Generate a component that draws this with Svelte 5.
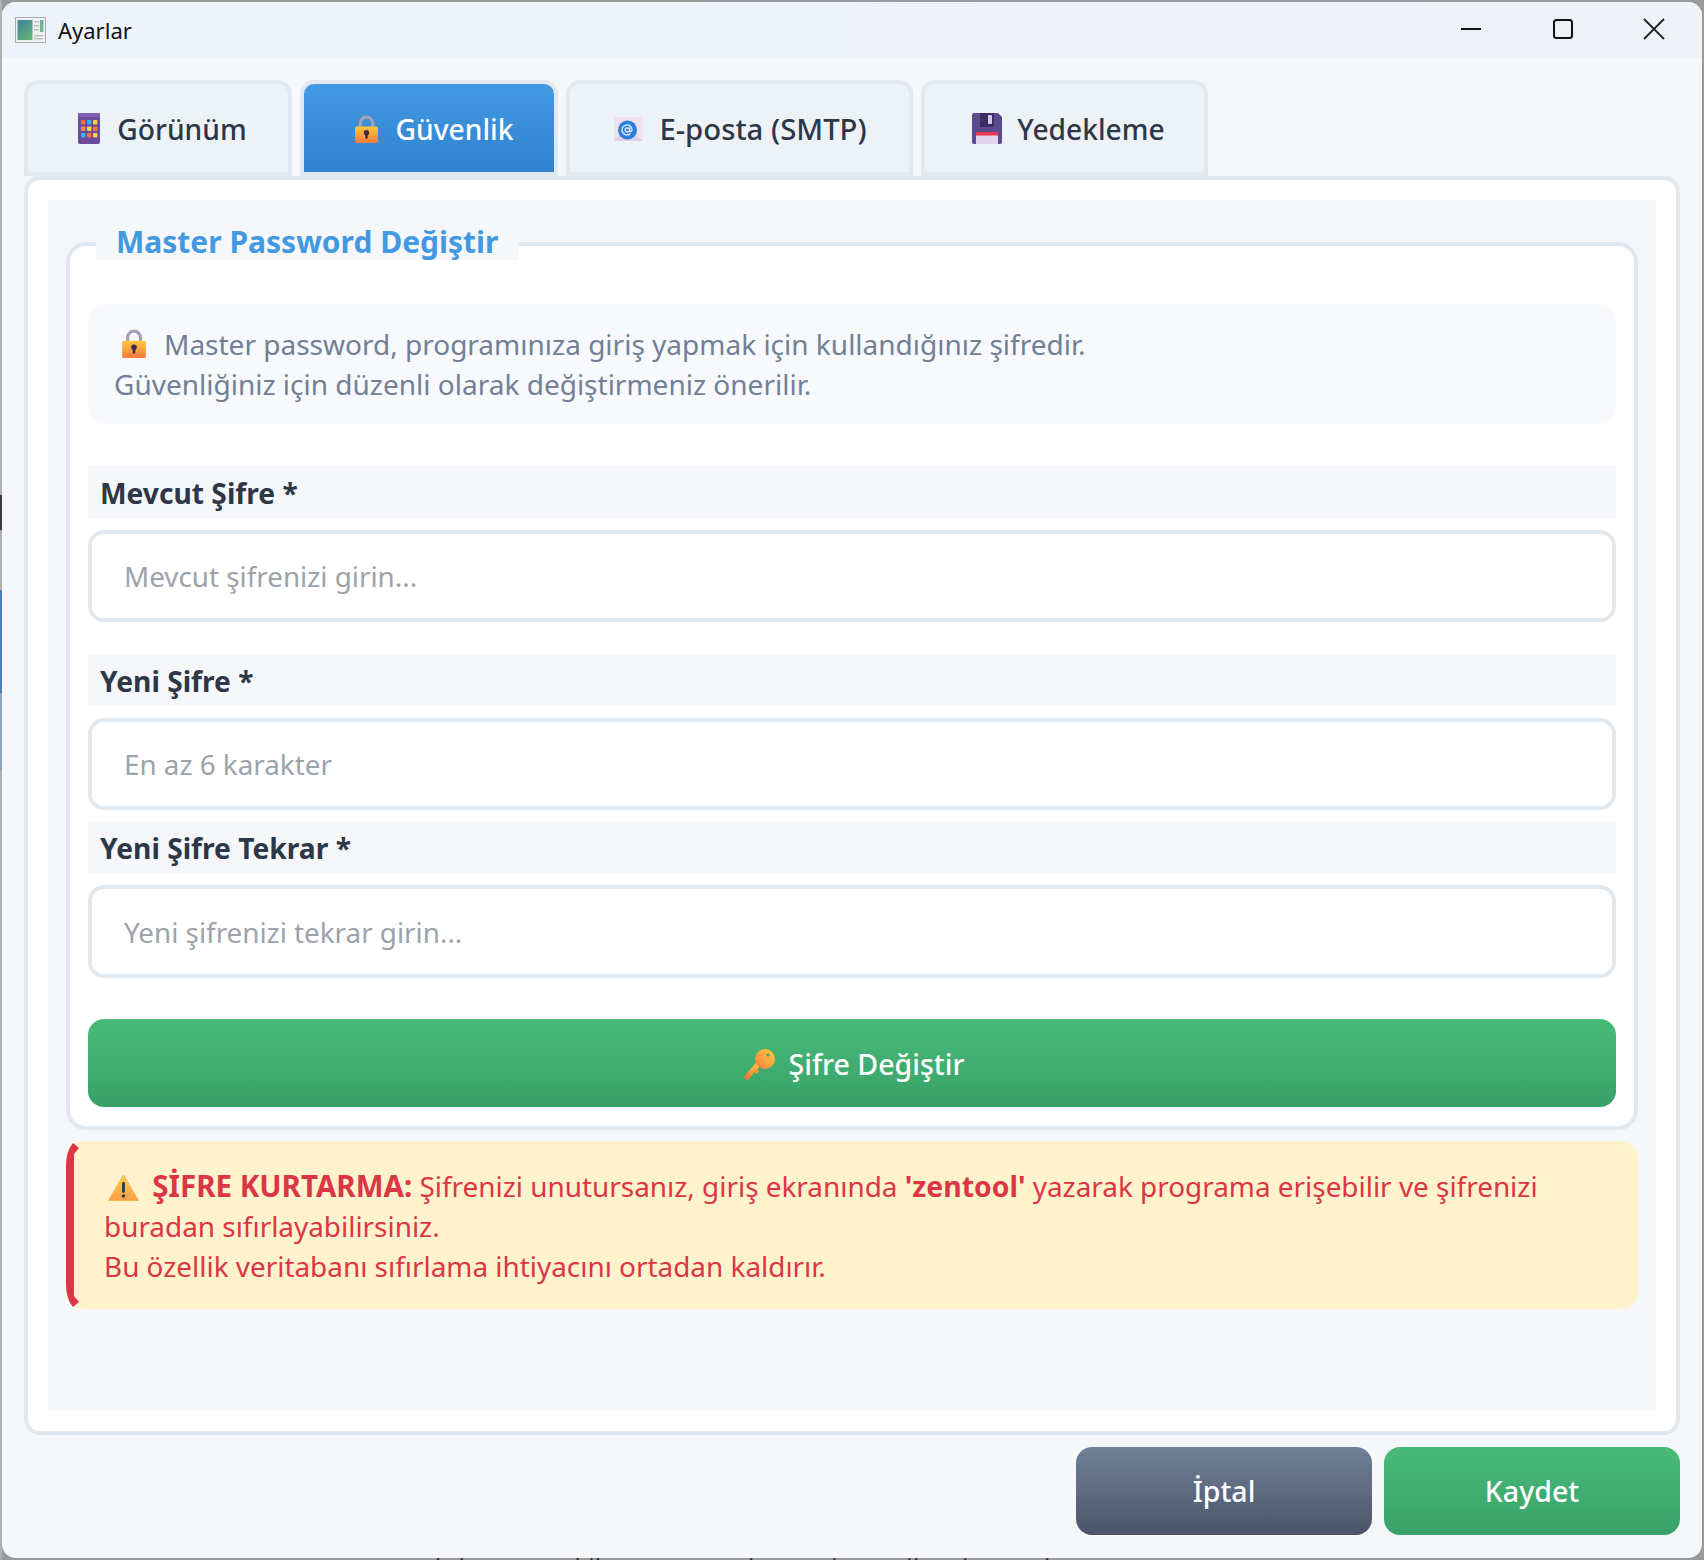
<script lang="ts">
  const tabs = [
    { id: "look", label: "Görünüm", width: 268 },
    { id: "lock", label: "Güvenlik", width: 258 },
    { id: "mail", label: "E-posta (SMTP)", width: 347 },
    { id: "disk", label: "Yedekleme", width: 287 },
  ];
  const fields = [
    { label: "Mevcut Şifre *", hint: "Mevcut şifrenizi girin...", cls: "first" },
    { label: "Yeni Şifre *", hint: "En az 6 karakter", cls: "second" },
    { label: "Yeni Şifre Tekrar *", hint: "Yeni şifrenizi tekrar girin...", cls: "third" },
  ];
</script>

{#snippet lock(size)}
  <svg class="emoji" width={size} height={size * 1.12} viewBox="0 0 24 27">
    <defs>
      <linearGradient id="lockBody" x1="0" y1="0" x2="0" y2="1">
        <stop offset="0" stop-color="#ffc83d" />
        <stop offset="1" stop-color="#f9793b" />
      </linearGradient>
    </defs>
    <path d="M6 12V8a6 6 0 0 1 12 0v4" fill="none" stroke="#a79fb8" stroke-width="3" />
    <rect x="1" y="11" width="22" height="16" rx="1.5" fill="url(#lockBody)" />
    <circle cx="12" cy="17" r="2.6" fill="#3b2f4a" />
    <rect x="10.8" y="17" width="2.4" height="6" rx="1" fill="#3b2f4a" />
  </svg>
{/snippet}

{#snippet tabIcon(id)}
  {#if id === "look"}
    <svg class="emoji" width="22" height="31" viewBox="0 0 22 31">
      <rect width="22" height="31" rx="2" fill="#6b4a9e" />
      <rect width="22" height="4" fill="#7f5fb5" />
      {#each [0, 1, 2] as r}
        {#each [0, 1, 2] as c}
          <rect
            x={3 + c * 6}
            y={7 + r * 6.5}
            width="4.4"
            height="4.4"
            rx="0.8"
            fill={[["#f4743b", "#33b5e5", "#ffd23f"], ["#ff8c42", "#ffd23f", "#f4743b"], ["#33b5e5", "#f4743b", "#ffd23f"]][r][c]}
          />
        {/each}
      {/each}
    </svg>
  {:else if id === "lock"}
    {@render lock(25)}
  {:else if id === "mail"}
    <svg class="emoji" width="29" height="24" viewBox="0 0 29 24">
      <rect width="29" height="24" fill="#efe2f0" />
      <path d="M0 24 L12 10 L29 24Z" fill="#dcd0ea" />
      <circle cx="13.5" cy="13" r="9.5" fill="#2f7fd6" />
      <path d="M16.5 16.5a5 5 0 1 1 1.5-3.5c0 2-2.4 2.2-2.4.4V10.5M15.6 13a2.2 2.2 0 1 1-4.4 0a2.2 2.2 0 0 1 4.4 0Z" fill="none" stroke="#e6eefa" stroke-width="1.3" />
    </svg>
  {:else}
    <svg class="emoji" width="30" height="31" viewBox="0 0 30 31">
      <path d="M2 0h24l4 4v25a2 2 0 0 1-2 2H2a2 2 0 0 1-2-2V2a2 2 0 0 1 2-2Z" fill="#5b4a8e" />
      <path d="M8 0h14v13a1 1 0 0 1-1 1H9a1 1 0 0 1-1-1Z" fill="#3a2f63" />
      <rect x="16" y="2" width="4" height="9" rx="1" fill="#d9c8e6" />
      <rect x="4" y="19" width="22" height="12" fill="#e2d3ea" />
      <rect x="4" y="19" width="22" height="3.5" fill="#e8384f" />
    </svg>
  {/if}
{/snippet}

<div class="desktop">
  <div class="edge"></div>
  <div class="behind">n. click on any of these new customers to see their transaction</div>
</div>

<div class="window">
  <header class="titlebar">
    <svg class="app-icon" width="31" height="26" viewBox="0 0 31 26">
      <defs>
        <linearGradient id="appPane" x1="0" y1="0" x2="0.6" y2="1">
          <stop offset="0" stop-color="#3f7f9c" />
          <stop offset="1" stop-color="#5fb27a" />
        </linearGradient>
      </defs>
      <rect x="0.5" y="0.5" width="30" height="25" fill="#eef0f2" stroke="#a6acb0" />
      <rect x="2.5" y="3" width="15" height="20" fill="url(#appPane)" />
      <rect x="19" y="4" width="5" height="1.4" fill="#b8bfc4" />
      <rect x="19" y="8" width="5" height="1.4" fill="#b8bfc4" />
      <rect x="19" y="12" width="5" height="1.4" fill="#b8bfc4" />
      <rect x="25" y="3" width="3.5" height="12" fill="#6fb58f" />
      <rect x="19" y="18" width="9" height="1.4" fill="#b8bfc4" />
      <rect x="19" y="21" width="9" height="1.4" fill="#b8bfc4" />
    </svg>
    <span class="title">Ayarlar</span>
    <div class="controls">
      <svg width="24" height="24" viewBox="0 0 24 24"><path d="M1 12h20" stroke="#111" stroke-width="2" /></svg>
      <svg width="24" height="24" viewBox="0 0 24 24"><rect x="3" y="3" width="18" height="18" rx="2.5" fill="none" stroke="#111" stroke-width="2" /></svg>
      <svg width="24" height="24" viewBox="0 0 24 24"><path d="M2 2l20 20M22 2L2 22" stroke="#222" stroke-width="1.8" /></svg>
    </div>
  </header>

  <main class="content">
    <nav class="tabs">
      {#each tabs as t, i}
        <button class="tab {t.id}" class:active={i === 1} style="width: {t.width}px">
          {@render tabIcon(t.id)}
          <span>{t.label}</span>
        </button>
      {/each}
    </nav>

    <div class="pane">
      <div class="page">
        <section class="group">
          <h2>Master Password Değiştir</h2>
          <div class="info">
            <div class="info-first">{@render lock(26)}<span>Master password, programınıza giriş yapmak için kullandığınız şifredir.</span></div>
            <div>Güvenliğiniz için düzenli olarak değiştirmeniz önerilir.</div>
          </div>
          {#each fields as f}
            <div class="field {f.cls}">
              <div class="label">{f.label}</div>
              <div class="input">{f.hint}</div>
            </div>
          {/each}
          <button class="green change">
            <svg class="emoji" width="32" height="32" viewBox="0 0 32 32">
              <defs>
                <linearGradient id="keyGrad" x1="1" y1="0" x2="0" y2="1">
                  <stop offset="0" stop-color="#ffd23f" />
                  <stop offset="1" stop-color="#f7793b" />
                </linearGradient>
              </defs>
              <path d="M3 29 L15 15" stroke="url(#keyGrad)" stroke-width="5" stroke-linecap="round" />
              <path d="M10 21l4 3.5" stroke="#f99a3a" stroke-width="4" />
              <circle cx="21" cy="11" r="10" fill="url(#keyGrad)" />
              <circle cx="24" cy="7" r="1.6" fill="#3aa36b" />
            </svg>
            Şifre Değiştir
          </button>
        </section>

        <aside class="warning">
          <svg class="accent" width="14" height="168" viewBox="0 0 14 168">
            <path d="M7 2L13 7L8 13V155L13 161L7 166Q0 158 0 143V25Q0 10 7 2Z" fill="#dc3545" />
          </svg>
          <svg class="emoji tri" width="31" height="27" viewBox="0 0 31 27">
            <defs>
              <linearGradient id="triGrad" x1="0" y1="0" x2="0" y2="1">
                <stop offset="0" stop-color="#ffcd4d" />
                <stop offset="1" stop-color="#fb9f4a" />
              </linearGradient>
            </defs>
            <path d="M15.5 1 L30.5 26.5 H0.5Z" fill="url(#triGrad)" stroke="#fbb44c" stroke-linejoin="round" />
            <rect x="14" y="8" width="3" height="11" rx="1.4" fill="#3f3a45" />
            <circle cx="15.5" cy="22" r="1.8" fill="#3f3a45" />
          </svg>
          <b class="lead">ŞİFRE KURTARMA:</b> Şifrenizi unutursanız, giriş ekranında <b>'zentool'</b> yazarak programa erişebilir ve şifrenizi buradan sıfırlayabilirsiniz.<br />
          Bu özellik veritabanı sıfırlama ihtiyacını ortadan kaldırır.
        </aside>
      </div>
    </div>

    <footer class="actions">
      <button class="grey">İptal</button>
      <button class="green">Kaydet</button>
    </footer>
  </main>
</div>

<style>
  :global(body) {
    background: #999a9c;
    overflow: hidden;
  }
  /* what shows of the screen behind the dialog */
  .desktop {
    position: absolute;
    inset: 0;
    width: 1704px;
    height: 1560px;
    overflow: hidden;
  }
  .edge {
    position: absolute;
    left: 0;
    top: 0;
    width: 2px;
    height: 1560px;
    background: linear-gradient(
      #b0b1b3 0 495px,
      #3a3a3c 495px 530px,
      #aeafb1 530px 590px,
      #4a7fb5 590px 693px,
      #8fa3bb 693px 770px,
      #aeafb1 770px
    );
  }
  .behind {
    position: absolute;
    left: 395px;
    top: 1551px;
    font-family: "Liberation Sans", sans-serif;
    font-size: 25px;
    line-height: 28px;
    color: #333;
    white-space: nowrap;
  }
  .window {
    position: relative;
    box-sizing: border-box;
    width: 1700px;
    height: 1556px;
    margin: 2px 2px 0;
    background: #f5f7fb;
    border-radius: 14px;
    display: flex;
    flex-direction: column;
    overflow: hidden;
    font-family: "Noto Sans", "Open Sans", sans-serif;
  }
  .titlebar {
    height: 56px;
    flex-shrink: 0;
    background: linear-gradient(90deg, #eef2fb, #eef2f7);
    display: flex;
    align-items: center;
    padding-left: 13px;
  }
  .title {
    margin-left: 12px;
    font-size: 22px;
    color: #111;
  }
  .controls {
    margin-left: auto;
    display: flex;
    gap: 67px;
    padding-right: 36px;
    margin-top: -3px;
  }
  .content {
    flex: 1;
    display: flex;
    flex-direction: column;
    padding: 22px 22px 23px;
    min-height: 0;
  }
  .tabs {
    display: flex;
    gap: 8px;
    height: 96px;
    flex-shrink: 0;
  }
  .tab {
    box-sizing: border-box;
    height: 96px;
    border: 4px solid #e2e8f0;
    border-radius: 14px 14px 0 0;
    background: #edf2f7;
    color: #2d3748;
    font: inherit;
    font-size: 28.2px;
    font-weight: 500;
    display: flex;
    align-items: center;
    justify-content: center;
    gap: 17px;
    padding: 1px 0 0 9px;
  }
  .tab.mail {
    gap: 16px;
    padding-left: 2px;
  }
  .tab.mail span {
    font-size: 29.3px;
  }
  .tab.disk {
    padding-left: 8px;
    gap: 15px;
  }
  .tab.active {
    background: linear-gradient(#4299e1, #3182ce);
    color: #fff;
  }
  .pane {
    flex: 1;
    box-sizing: border-box;
    background: #fff;
    border: 4px solid #e2e8f0;
    border-radius: 16px;
    padding: 20px;
    min-height: 0;
  }
  .page {
    height: 100%;
    background: #f5f7fb;
    box-sizing: border-box;
    padding: 42px 18px 0;
  }
  .group {
    position: relative;
    box-sizing: border-box;
    height: 888px;
    background: #fff;
    border: 4px solid #e2e8f0;
    border-radius: 20px;
    padding: 58px 18px 0;
  }
  h2 {
    position: absolute;
    left: 26px;
    top: -22px;
    margin: 0;
    padding: 0 21px 0 20px;
    background: #f5f7fb;
    color: #4299e1;
    font-size: 30px;
    font-weight: 700;
    line-height: 36px;
  }
  .info {
    box-sizing: border-box;
    height: 120px;
    background: #f7f9fc;
    border-radius: 16px;
    color: #718096;
    font-size: 28px;
    line-height: 40px;
    padding: 20px 26px;
  }
  .info-first {
    display: flex;
    align-items: center;
    gap: 17px;
    padding-left: 7px;
  }
  .field {
    display: flex;
    flex-direction: column;
    gap: 12px;
  }
  .first { margin-top: 42px; }
  .second { margin-top: 32px; }
  .third { margin-top: 11px; }
  .label {
    height: 52px;
    line-height: 54px;
    background: #f5f7fb;
    color: #2d3748;
    font-size: 28.2px;
    font-weight: 700;
    padding-left: 12px;
  }
  .input {
    box-sizing: border-box;
    height: 92px;
    background: #fff;
    border: 4px solid #e2e8f0;
    border-radius: 16px;
    color: #9ca3ab;
    font-size: 27.8px;
    line-height: 84px;
    padding-left: 32px;
  }
  .third .input {
    height: 93px;
    line-height: 86px;
  }
  button.green, button.grey {
    border: 0;
    border-radius: 16px;
    color: #fff;
    font: inherit;
    font-size: 28.5px;
    font-weight: 500;
  }
  .green {
    background: linear-gradient(#48bb78, #38a169);
  }
  .grey {
    background: linear-gradient(#718096, #4a5568);
  }
  .change {
    width: 100%;
    height: 88px;
    margin-top: 41px;
    display: flex;
    align-items: center;
    justify-content: center;
    gap: 13px;
    padding: 2px 0 0 4px;
  }
  .warning {
    position: relative;
    box-sizing: border-box;
    height: 168px;
    margin-top: 11px;
    background: #fff3cd;
    border-radius: 16px;
    color: #dc3545;
    font-size: 27.9px;
    line-height: 40px;
    padding: 25px 70px 0 38px;
  }
  .accent {
    position: absolute;
    left: 0;
    top: 0;
  }
  .warning b {
    font-weight: 700;
    font-size: 28.4px;
  }
  .warning b.lead {
    font-size: 29.5px;
  }
  .tri {
    vertical-align: -4px;
    margin: 0 6px 0 4px;
  }
  .actions {
    display: flex;
    justify-content: flex-end;
    gap: 12px;
    margin-top: 12px;
    flex-shrink: 0;
  }
  .actions button {
    width: 296px;
    height: 88px;
  }
</style>
